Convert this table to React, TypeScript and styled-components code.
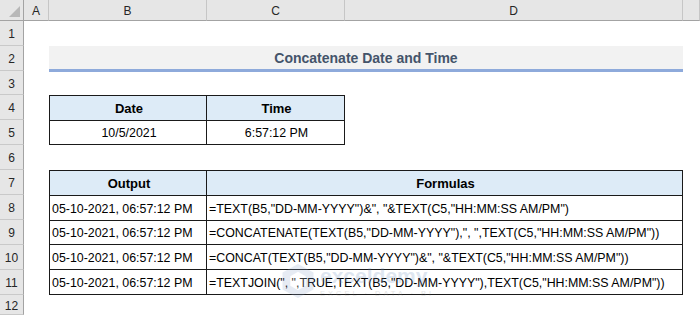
import styled, { createGlobalStyle } from 'styled-components';

const GlobalStyle = createGlobalStyle`
  html, body {
    margin: 0;
    padding: 0;
    background: #ffffff;
    overflow: hidden;
  }
  body {
    font-family: "Liberation Sans", Arial, sans-serif;
  }
`;

const Sheet = styled.div`
  position: relative;
  display: grid;
  grid-template-columns: 24px 25px 158px 138px 338px 1fr;
  grid-template-rows: 21px 25px 25px 24px repeat(8, 25px) 1fr;
  width: 700px;
  height: 315px;
  background: #ffffff;
`;

const Corner = styled.div`
  grid-column: 1;
  grid-row: 1;
  position: relative;
  background: #e6e6e6;
  border-right: 1px solid #a3a3a3;
  border-bottom: 1px solid #a3a3a3;
  box-sizing: border-box;

  &::after {
    content: '';
    position: absolute;
    right: 3px;
    bottom: 3px;
    border-style: solid;
    border-width: 0 0 11px 11px;
    border-color: transparent transparent #b8b8b8 transparent;
  }
`;

const ColHead = styled.div<{ $col: number }>`
  grid-column: ${(p) => p.$col};
  grid-row: 1;
  display: flex;
  align-items: center;
  justify-content: center;
  background: #e6e6e6;
  border-right: 1px solid #c6c6c6;
  border-bottom: 1px solid #a3a3a3;
  box-sizing: border-box;
  font-size: 12px;
  color: #262626;
  padding-top: 1px;
`;

const RowHead = styled.div<{ $row: number }>`
  grid-column: 1;
  grid-row: ${(p) => p.$row + 1};
  display: flex;
  align-items: center;
  justify-content: center;
  background: #e6e6e6;
  border-right: 1px solid #a3a3a3;
  border-bottom: 1px solid #c9c9c9;
  box-sizing: border-box;
  font-size: 12px;
  color: #262626;
  padding-top: 2px;
`;

const Title = styled.div`
  grid-column: 3 / 6;
  grid-row: 3;
  display: flex;
  align-items: center;
  justify-content: center;
  background: #f2f2f2;
  border-bottom: 3px solid #8eaadb;
  margin-bottom: -1px;
  box-sizing: border-box;
  font-size: 14px;
  font-weight: bold;
  color: #44546a;
  padding-top: 1px;
`;

const Table = styled.div<{ $cols: string; $rows: string; $template: string }>`
  grid-column: ${(p) => p.$cols};
  grid-row: ${(p) => p.$rows};
  display: grid;
  grid-template-columns: ${(p) => p.$template};
  grid-auto-rows: 1fr;
  gap: 1px;
  background: #1a1a1a;
  border: 1px solid #1a1a1a;
  box-sizing: border-box;
`;

const Cell = styled.div<{ $head?: boolean; $align?: 'left' | 'center' }>`
  display: flex;
  align-items: center;
  justify-content: ${(p) => (p.$align === 'left' ? 'flex-start' : 'center')};
  padding: 2px 0 0 2px;
  background: ${(p) => (p.$head ? '#ddebf7' : '#ffffff')};
  font-size: ${(p) => (p.$head ? '13px' : '12.4px')};
  font-weight: ${(p) => (p.$head ? 'bold' : 'normal')};
  color: #000000;
  white-space: nowrap;
  overflow: hidden;
`;

const Watermark = styled.div`
  position: absolute;
  left: 281px;
  top: 262px;
  display: flex;
  align-items: center;
  gap: 5px;
  opacity: 0.22;
  pointer-events: none;
`;

const MarkText = styled.div`
  display: flex;
  flex-direction: column;
  line-height: 1;
`;

const MarkName = styled.span`
  font-size: 21px;
  font-weight: bold;
  color: #6f8fc0;
`;

const MarkTag = styled.span`
  font-size: 7.5px;
  letter-spacing: 3px;
  color: #8a8a8a;
  margin-top: 4px;
`;

const columns = ['A', 'B', 'C', 'D', ''];

const formulas = [
  '=TEXT(B5,"DD-MM-YYYY")&", "&TEXT(C5,"HH:MM:SS AM/PM")',
  '=CONCATENATE(TEXT(B5,"DD-MM-YYYY"),", ",TEXT(C5,"HH:MM:SS AM/PM"))',
  '=CONCAT(TEXT(B5,"DD-MM-YYYY")&", "&TEXT(C5,"HH:MM:SS AM/PM"))',
  '=TEXTJOIN(", ",TRUE,TEXT(B5,"DD-MM-YYYY"),TEXT(C5,"HH:MM:SS AM/PM"))',
];

const App = () => {
  return (
    <>
      <GlobalStyle />
      <Sheet>
        <Corner />
        {columns.map((c, i) => (
          <ColHead key={i} $col={i + 2}>
            {c}
          </ColHead>
        ))}
        {Array.from({ length: 12 }, (_, i) => (
          <RowHead key={i} $row={i + 1}>
            {i + 1}
          </RowHead>
        ))}

        <Title>Concatenate Date and Time</Title>

        <Table $cols="3 / 5" $rows="5 / 7" $template="156px 1fr">
          <Cell $head>Date</Cell>
          <Cell $head>Time</Cell>
          <Cell>10/5/2021</Cell>
          <Cell>6:57:12 PM</Cell>
        </Table>

        <Table $cols="3 / 6" $rows="8 / 13" $template="156px 1fr">
          <Cell $head>Output</Cell>
          <Cell $head>Formulas</Cell>
          {formulas.flatMap((f, i) => [
            <Cell key={`o${i}`} $align="left">
              05-10-2021, 06:57:12 PM
            </Cell>,
            <Cell key={`f${i}`} $align="left">
              {f}
            </Cell>,
          ])}
        </Table>

        <Watermark>
          <svg width="34" height="38" viewBox="0 0 22 24">
            <path d="M11 1 L21 6.5 L21 17.5 L11 23 L1 17.5 L1 6.5 Z" fill="#8fa6cc" />
            <path d="M11 6 L16 9 L16 15 L11 18 L6 15 L6 9 Z" fill="#ffffff" />
          </svg>
          <MarkText>
            <MarkName>exceldemy</MarkName>
            <MarkTag>EXCEL · DATA · BI</MarkTag>
          </MarkText>
        </Watermark>
      </Sheet>
    </>
  );
};

export default App;
